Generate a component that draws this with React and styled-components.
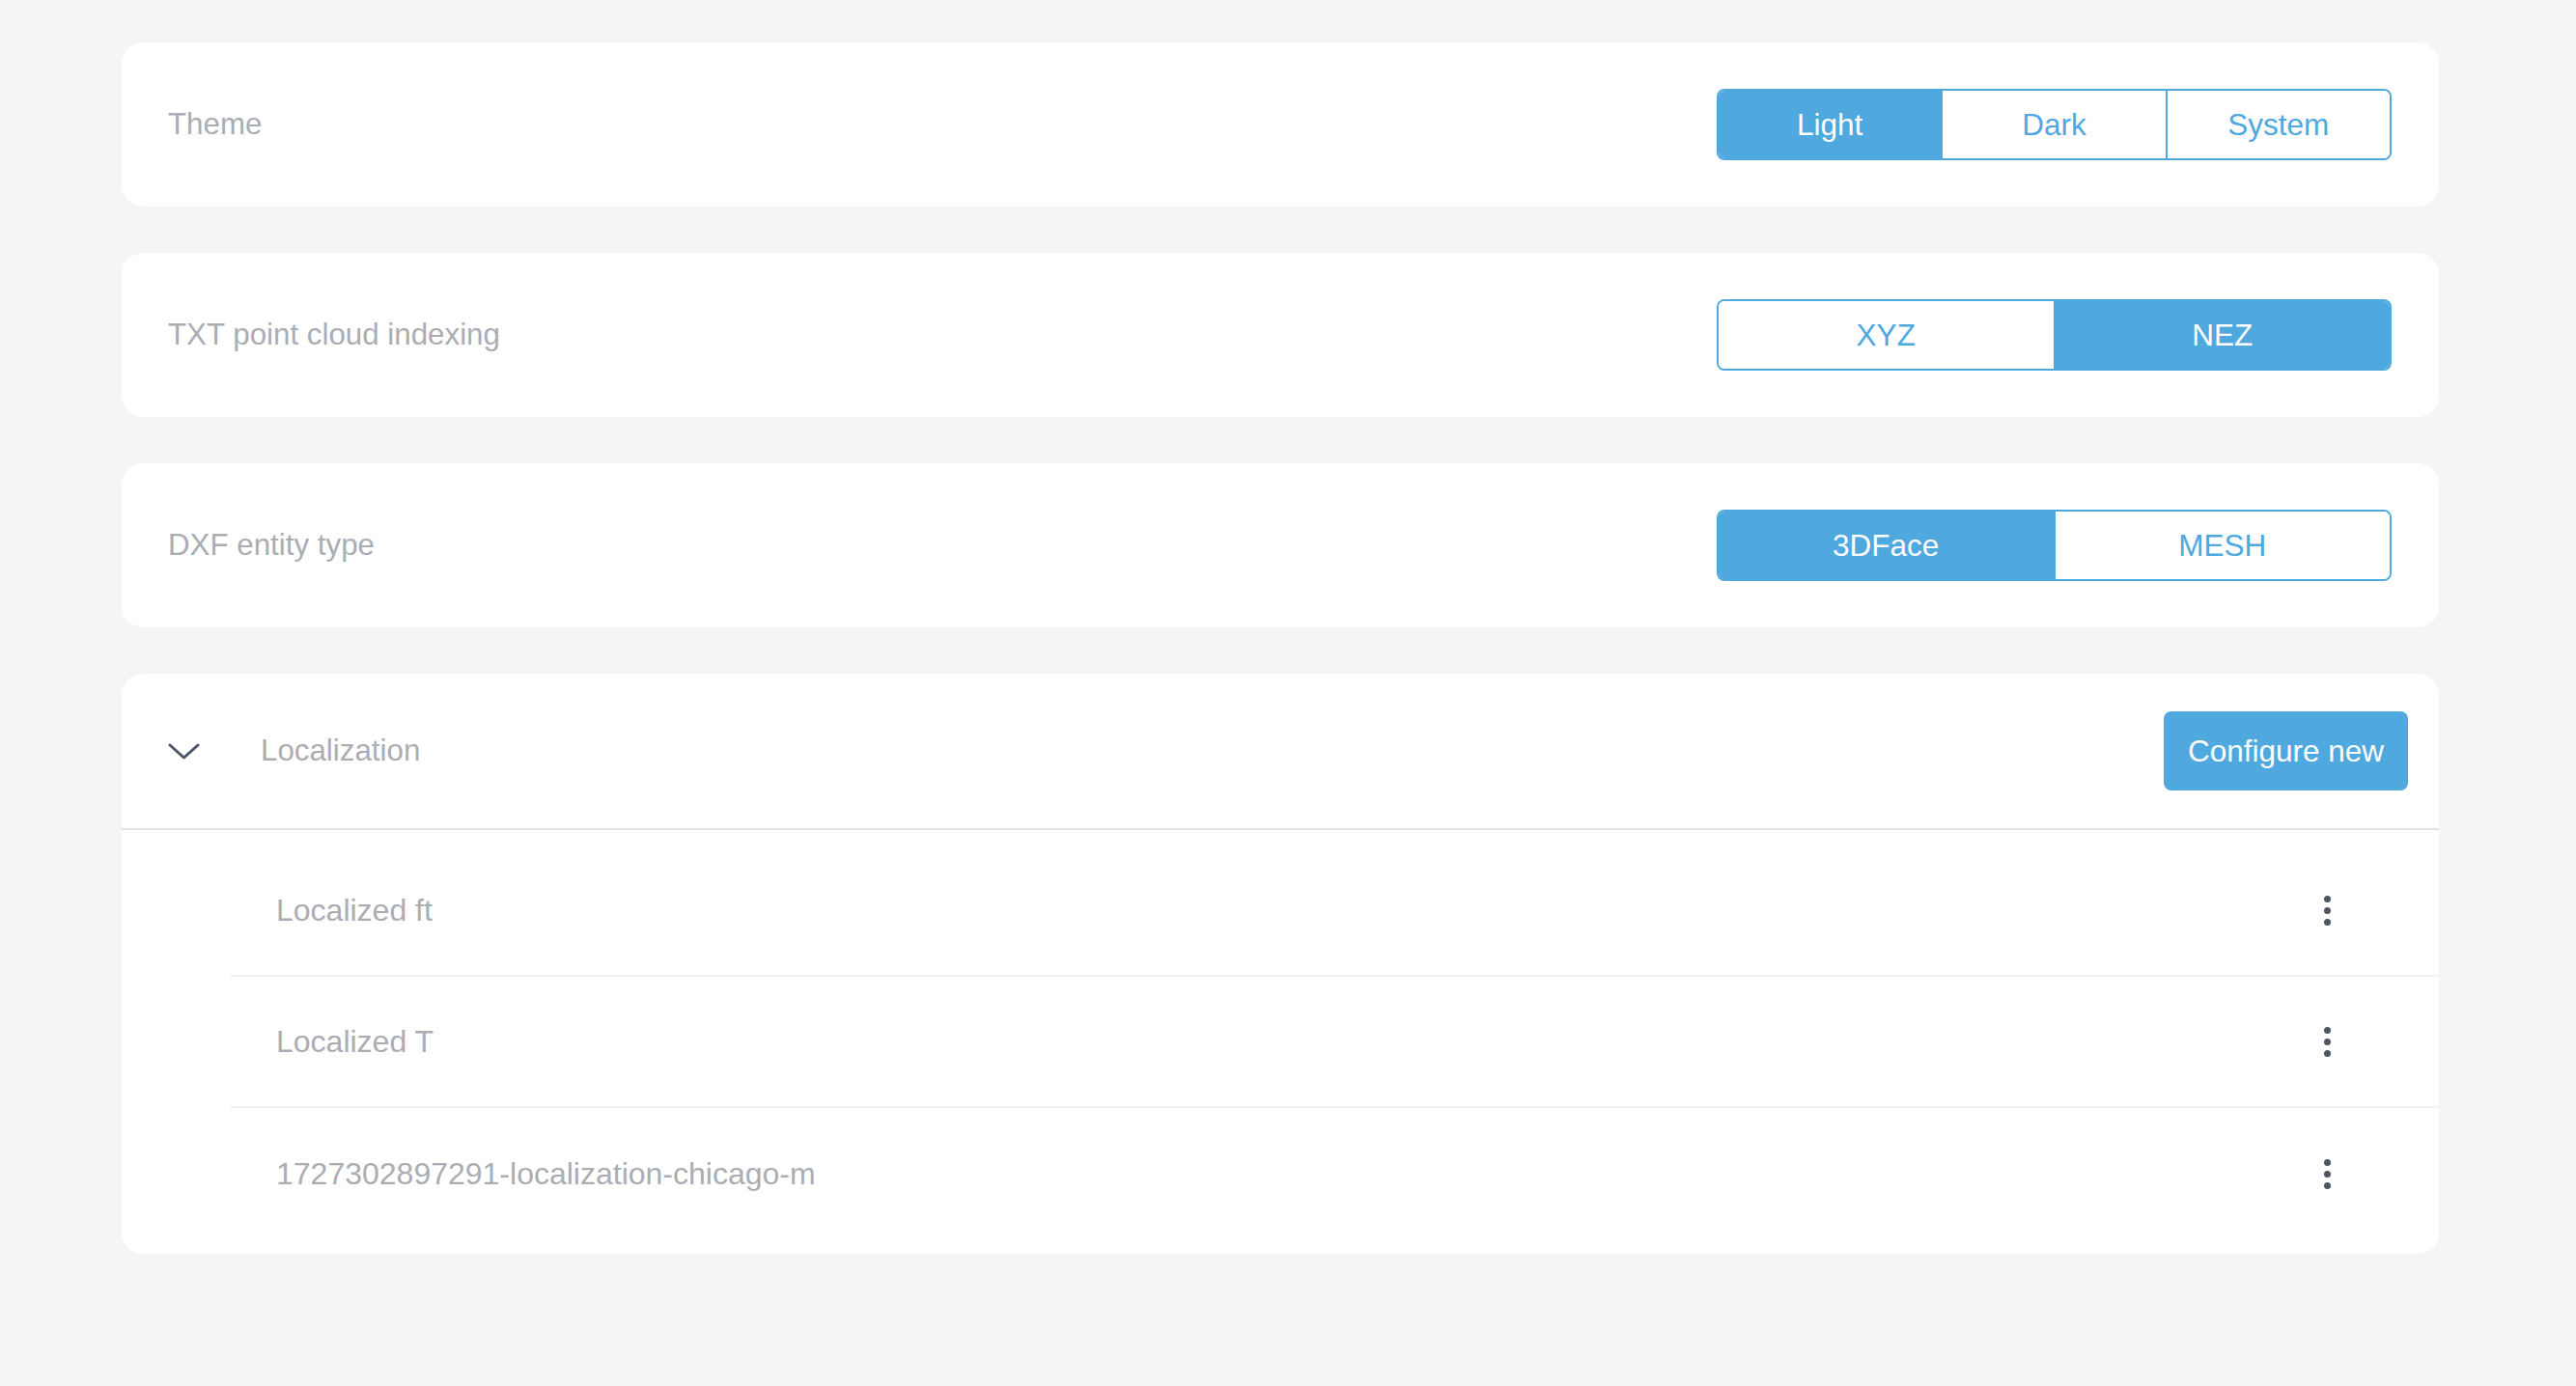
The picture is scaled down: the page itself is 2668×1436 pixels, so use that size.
import React, { useState } from "react";
import styled, { createGlobalStyle } from "styled-components";

const Global = createGlobalStyle`
  html, body { margin: 0; padding: 0; background: #f5f5f5; }
  body { font-family: "Liberation Sans", Arial, sans-serif; }
  * { box-sizing: border-box; }
`;

const BLUE = "#4fa8de";
const GREY_TEXT = "#aaadb3";

const Page = styled.div`
  padding: 44px 142px 60px 126px;
  display: flex;
  flex-direction: column;
  gap: 48px;
`;

const Card = styled.section`
  background: #ffffff;
  border-radius: 22px;
  overflow: hidden;
`;

const SettingRow = styled.div`
  display: flex;
  align-items: center;
  justify-content: space-between;
  padding: 48px 49px 48px 48px;
`;

const Label = styled.span`
  font-size: 31.3px;
  color: ${GREY_TEXT};
  line-height: 1;
`;

const Segmented = styled.div`
  display: flex;
  width: 699px;
  height: 74px;
  border: 2px solid ${BLUE};
  border-radius: 8px;
  overflow: hidden;
`;

const Segment = styled.button`
  flex: 1;
  border: none;
  border-left: ${(p) => (p.$first ? "none" : `2px solid ${BLUE}`)};
  background: ${(p) => (p.$active ? BLUE : "#ffffff")};
  color: ${(p) => (p.$active ? "#ffffff" : BLUE)};
  font-family: "Liberation Sans", Arial, sans-serif;
  font-size: 31.5px;
  padding: 0;
  cursor: pointer;
`;

const Header = styled.div`
  display: flex;
  align-items: center;
  height: 162px;
  padding: 0 32px 0 48px;
  border-bottom: 2px solid #e2e2e2;
`;

const Toggle = styled.button`
  border: none;
  background: none;
  padding: 0;
  width: 33px;
  height: 17px;
  display: flex;
  margin-right: 63px;
  cursor: pointer;
`;

const HeaderTitle = styled(Label)`
  flex: 1;
`;

const PrimaryButton = styled.button`
  height: 82px;
  width: 253px;
  border: none;
  border-radius: 8px;
  background: ${BLUE};
  color: #ffffff;
  font-family: "Liberation Sans", Arial, sans-serif;
  font-size: 31.5px;
  cursor: pointer;
`;

const List = styled.div`
  margin-left: 112px;
  padding: 16px 0 15px;
  display: flex;
  flex-direction: column;
`;

const Item = styled.div`
  height: 136px;
  display: flex;
  align-items: center;
  justify-content: space-between;
  padding: 0 92px 0 48px;
  border-bottom: ${(p) => (p.$last ? "none" : "2px solid #f1f1f1")};
`;

const ItemName = styled(Label)`
  font-size: 32px;
`;

const Kebab = styled.button`
  width: 48px;
  height: 48px;
  border: none;
  background: none;
  padding: 0;
  display: flex;
  flex-direction: column;
  align-items: center;
  justify-content: center;
  gap: 5px;
  cursor: pointer;
`;

const Dot = styled.span`
  width: 7px;
  height: 7px;
  border-radius: 50%;
  background: #4b5563;
`;

function SegmentSetting({ label, options, initial }) {
  const [value, setValue] = useState(initial);
  return (
    <Card>
      <SettingRow>
        <Label>{label}</Label>
        <Segmented>
          {options.map((o, i) => (
            <Segment
              key={o}
              $first={i === 0}
              $active={o === value}
              onClick={() => setValue(o)}
            >
              {o}
            </Segment>
          ))}
        </Segmented>
      </SettingRow>
    </Card>
  );
}

const items = ["Localized ft", "Localized T", "1727302897291-localization-chicago-m"];

export default function App() {
  const [open, setOpen] = useState(true);
  return (
    <>
      <Global />
      <Page>
        <SegmentSetting label="Theme" options={["Light", "Dark", "System"]} initial="Light" />
        <SegmentSetting label="TXT point cloud indexing" options={["XYZ", "NEZ"]} initial="NEZ" />
        <SegmentSetting label="DXF entity type" options={["3DFace", "MESH"]} initial="3DFace" />
        <Card>
          <Header>
            <Toggle onClick={() => setOpen(!open)} aria-label="toggle">
              <svg width="33" height="17" viewBox="0 0 33 17" fill="none">
                <polyline
                  points="2,2 16.5,15 31,2"
                  stroke="#4a5568"
                  strokeWidth="3"
                  strokeLinecap="round"
                  strokeLinejoin="round"
                />
              </svg>
            </Toggle>
            <HeaderTitle>Localization</HeaderTitle>
            <PrimaryButton>Configure new</PrimaryButton>
          </Header>
          {open && (
            <List>
              {items.map((name, i) => (
                <Item key={name} $last={i === items.length - 1}>
                  <ItemName>{name}</ItemName>
                  <Kebab aria-label="more">
                    <Dot />
                    <Dot />
                    <Dot />
                  </Kebab>
                </Item>
              ))}
            </List>
          )}
        </Card>
      </Page>
    </>
  );
}
